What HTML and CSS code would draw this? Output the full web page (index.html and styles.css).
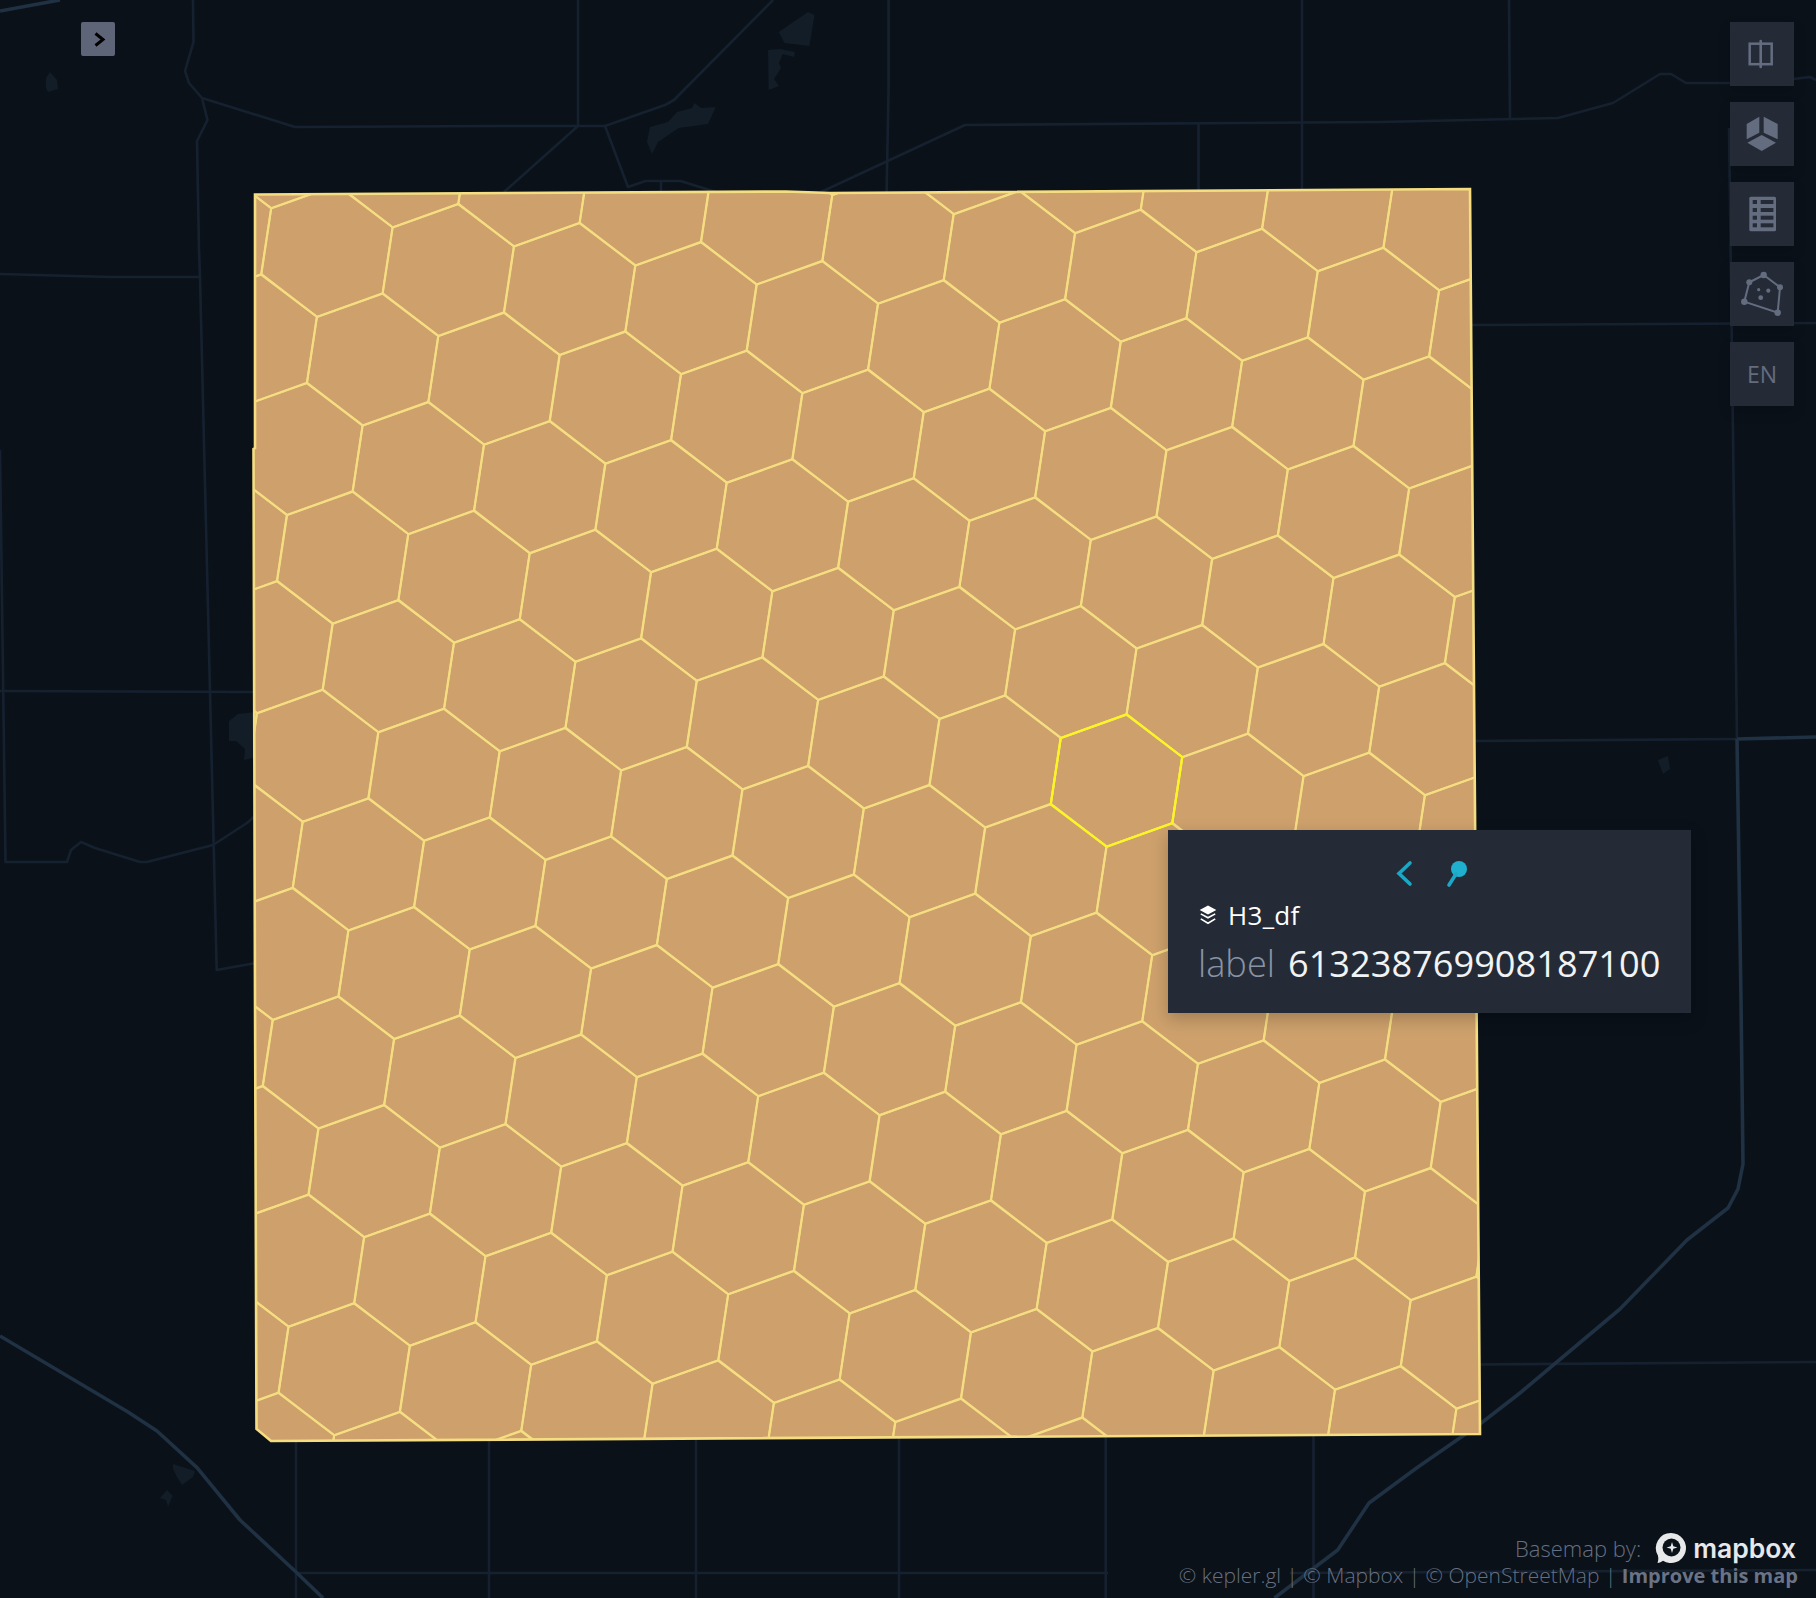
FILE: index.html
```html
<!DOCTYPE html>
<html lang="en">
<head>
<meta charset="utf-8">
<title>kepler.gl</title>
<link rel="stylesheet" href="styles.css">
</head>
<body>
<main class="map">
  <svg class="basemap" viewBox="0 0 1816 1598" width="1816" height="1598" aria-hidden="true">
    <g class="water">
      <polygon points="50,72 57,80 58,89 48,92 46,88 46,78"/>
      <polygon points="808,12 814.5,15 809.4,46 784.6,43 778.8,32"/>
      <polygon points="768,50 779.5,49 795,52 794,57 782.6,54 779,63 781,68 774,79 779,86 768.6,90"/>
      <polygon points="694.6,103 701,108 715.7,107 708,124 678.7,128 658,142 652,154 647,142 650,127 668,122 677,112 692,108"/>
      <polygon points="229,721 238,714 256,712 256,757 244,760 245,749 236,741 229,741"/>
      <polygon points="173,1464 195,1471 193,1477 182,1485 177,1477 173,1469"/>
      <polygon points="160,1498 167,1490 172.6,1496 168,1507 166,1500"/>
      <polygon points="1658,760 1668,756 1670,769 1663,774"/>
    </g>
    <g class="road-faint">
      <polyline points="193,0 193.5,42 185,71 189,83 202,98 207.5,120 197,141 199,250 200,277 216.7,970 256,963"/>
      <polyline points="202,98 295,127 500,126 605,126"/>
      <polyline points="0,274 110,277 200,277"/>
      <polyline points="0,450 5.5,862 67,862 71,850 81,842 95,848 140,862 147,862 213,845 247,823 256,815"/>
      <polyline points="0,691 256,692"/>
      <polyline points="578,0 578,126 504,192"/>
      <polyline points="773,0 674,100 665,105 605,126 628,187 645.5,181 680.6,181 715.7,192"/>
      <polyline points="661,182 661,192"/>
      <polyline points="821,192 965,125 1380,122 1558,118 1613,103 1660,74 1671,74 1686,83 1760,83 1810,77 1816,80"/>
      <polyline points="888.5,0 888.5,93 886.6,192"/>
      <polyline points="1198.5,123 1198.5,192"/>
      <polyline points="1302,0 1302,192"/>
      <polyline points="1509,0 1510,120"/>
      <polyline points="1729,128 1737,739"/>
      <polyline points="1472,325 1816,323"/>
      <polyline points="1476,741 1737,739"/>
      <polyline points="1480,1364.5 1816,1362"/>
      <polyline points="296,1440 296,1598"/>
      <polyline points="489,1440 489,1598"/>
      <polyline points="696,1438 696,1598"/>
      <polyline points="899,1437 899,1598"/>
      <polyline points="1105.7,1436 1105.7,1598"/>
      <polyline points="1313.5,1435 1313.5,1598"/>
      <polyline points="296,1573 1108,1573"/>
      <polyline points="1290,1573 1816,1570"/>
    </g>
    <g class="road-main">
      <polyline points="0,11 60,0"/>
      <polyline points="0,1336 128,1412 157,1431 197,1467.6 240,1520 296,1572 323,1598"/>
      <polyline points="1737,739 1816,737"/>
      <polyline points="1737,739 1741,1000 1743,1164 1738,1189 1728,1208 1687,1240 1620,1309 1520,1393 1480,1424 1418,1467 1369,1503 1337.7,1550 1274.5,1598"/>
    </g>
    <defs>
      <clipPath id="field-clip">
        <polygon points="255,194.5 786,191.5 830,193 1470,189 1480,1434 271,1441 256.5,1429 255,1000 253.5,449 255,448"/>
      </clipPath>
    </defs>
    <polygon class="field" points="255,194.5 786,191.5 830,193 1470,189 1480,1434 271,1441 256.5,1429 255,1000 253.5,449 255,448"/>
    <g id="cells" class="cells" clip-path="url(#field-clip)"></g>
    <polygon class="field-edge" points="255,194.5 786,191.5 830,193 1470,189 1480,1434 271,1441 256.5,1429 255,1000 253.5,449 255,448"/>
    <polygon class="cell-active" points="1126.7,714.3 1182.3,757 1172.3,823.3 1106.7,846.7 1050.7,804.3 1060.7,738"/>
  </svg>

  <button class="side-toggle" type="button" aria-label="Show sidebar">
    <svg viewBox="0 0 34 34" width="34" height="34"><polyline class="chevron-dark" points="14.500,11.500 22,17.500 14.500,23.500"/></svg>
  </button>

  <nav class="toolbar">
    <button class="tool" type="button" aria-label="Split map">
      <svg viewBox="0 0 64 64" width="64" height="64">
        <rect class="tool-line" x="19.7" y="21.7" width="22" height="20.5"/>
        <line class="tool-line heavy" x1="30.7" y1="19" x2="30.7" y2="45"/>
      </svg>
    </button>
    <button class="tool" type="button" aria-label="3D view">
      <svg viewBox="0 0 64 64" width="64" height="64">
        <polygon class="tool-fill" points="16.7,22 29.3,14.7 29.3,30.7 16.7,37.3"/>
        <polygon class="tool-fill" points="33.7,14.7 47.7,22 47.7,37.3 33.7,30.7"/>
        <polygon class="tool-fill" points="31.7,33 46,40.7 31.7,49 17.3,40.7"/>
      </svg>
    </button>
    <button class="tool" type="button" aria-label="Data table">
      <svg viewBox="0 0 64 64" width="64" height="64">
        <rect class="tool-fill" x="19.3" y="14.7" width="26.7" height="34.6" rx="1.5"/>
        <g class="tool-cut">
          <rect x="22.7" y="18" width="4.3" height="4"/><rect x="30.7" y="18" width="12.7" height="4"/>
          <rect x="22.7" y="26" width="4.3" height="4"/><rect x="30.7" y="26" width="12.7" height="4"/>
          <rect x="22.7" y="33.7" width="4.3" height="4"/><rect x="30.7" y="33.7" width="12.7" height="4"/>
          <rect x="22.7" y="41.3" width="4.3" height="4"/><rect x="30.7" y="41.3" width="12.7" height="4"/>
        </g>
      </svg>
    </button>
    <button class="tool" type="button" aria-label="Draw on map">
      <svg viewBox="0 0 64 64" width="64" height="64">
        <polygon class="tool-line thin" points="33.7,13 50,25.3 47.7,50.7 14.3,39.7 19.3,20.3"/>
        <g class="tool-fill">
          <circle cx="33.7" cy="13" r="3.2"/><circle cx="50" cy="25.3" r="3"/><circle cx="47.7" cy="50.7" r="3.2"/>
          <circle cx="14.3" cy="39.7" r="3.2"/><circle cx="19.3" cy="20.3" r="3"/>
          <circle cx="28.7" cy="27.7" r="1.6"/><circle cx="38.3" cy="28.7" r="2.1"/><circle cx="30.7" cy="35.7" r="2.4"/>
        </g>
      </svg>
    </button>
    <button class="tool tool-text" type="button">EN</button>
  </nav>

  <section class="tooltip">
    <div class="tooltip-actions">
      <svg viewBox="0 0 18 28" width="18" height="28"><polyline class="accent-line" points="14,3 3,13.5 14,24"/></svg>
      <svg viewBox="0 0 24 28" width="24" height="28">
        <circle class="accent-fill" cx="14" cy="9" r="8"/>
        <line class="accent-line" x1="11" y1="14" x2="4" y2="25"/>
      </svg>
    </div>
    <div class="tooltip-layer">
      <svg viewBox="0 0 16 18" width="18" height="20">
        <polygon class="layer-top" points="8,0.5 15.5,4.5 8,8.5 0.5,4.5"/>
        <polyline class="layer-line" points="1.5,8 8,11.5 14.500,8"/>
        <polyline class="layer-line" points="1.5,12.5 8,16.5 14.500,12.5"/>
      </svg>
      <span>H3_df</span>
    </div>
    <div class="tooltip-row">
      <span class="tooltip-key">label</span>
      <span class="tooltip-value">613238769908187100</span>
    </div>
  </section>

  <footer class="attribution">
    <div class="basemap-by">
      <span>Basemap by:</span>
      <svg viewBox="0 0 32 32" width="32" height="32">
        <path class="logo-mark" d="M16 1a15 15 0 1 1-8 27.7C6.500 29.800 4.500 31 2.500 31 3.500 28.500 3.500 26 2.900 23.500A15 15 0 0 1 16 1Z"/>
        <circle class="logo-hole" cx="16.500" cy="15.500" r="9"/>
        <path class="logo-star" d="M17 10l1.300 4.200 4.200 1.300-4.200 1.300L17 21l-1.300-4.200-4.200-1.300 4.200-1.300Z"/>
      </svg>
      <span class="mapbox-word">mapbox</span>
    </div>
    <div class="credits">© kepler.gl | © Mapbox | © OpenStreetMap | <strong>Improve this map</strong></div>
  </footer>
</main>
<script src="app.js"></script>
</body>
</html>
```

FILE: styles.css
```css
* { box-sizing: border-box; }
html, body { margin: 0; padding: 0; }
body { background: #0a1119; font-family: "Open Sans", "Liberation Sans", sans-serif; }

.map { position: relative; width: 1816px; height: 1598px; overflow: hidden; background: #0a1119; }
.basemap { position: absolute; inset: 0; display: block; }

.water polygon { fill: #121d27; }
.road-faint polyline { fill: none; stroke: #162130; stroke-width: 2.6; stroke-linejoin: round; }
.road-main polyline { fill: none; stroke: #1f3142; stroke-width: 3.6; stroke-linejoin: round; }

.field { fill: #cea16c; }
.cells polygon { fill: none; stroke: #f5de82; stroke-width: 2; stroke-linejoin: round; }
.field-edge { fill: none; stroke: #f5de82; stroke-width: 2.6; stroke-linejoin: miter; }
.cell-active { fill: none; stroke: #fbf71c; stroke-width: 2.2; stroke-linejoin: round; }

.side-toggle {
  position: absolute; left: 81px; top: 22px;
  width: 34px; height: 34px; padding: 0; border: 0; border-radius: 2px;
  background: #5f6579; display: block;
}
.side-toggle svg { display: block; }
.chevron-dark { fill: none; stroke: #000; stroke-width: 3; stroke-linecap: butt; stroke-linejoin: miter; }

.toolbar { position: absolute; top: 22px; right: 22px; display: flex; flex-direction: column; gap: 16px; }
.tool {
  width: 64px; height: 64px; padding: 0; border: 0; display: block;
  background: #242b36; box-shadow: 0 6px 12px rgba(0, 0, 0, 0.16);
}
.tool svg { display: block; }
.tool-fill { fill: #646c80; }
.tool-cut rect { fill: #242b36; }
.tool-line { fill: none; stroke: #646c80; stroke-width: 2.5; }
.tool-line.heavy { stroke-width: 2.6; stroke-linecap: round; }
.tool-line.thin { stroke-width: 2; }
.tool-text { color: #646c80; font-family: "Open Sans", sans-serif; font-size: 23px; font-weight: 500; line-height: 62px; text-align: center; }

.tooltip {
  position: absolute; left: 1168px; top: 830px; width: 523px; height: 183px;
  padding: 30px 30px 0 30px; background: #242b36; color: #fff;
  box-shadow: 0 6px 16px rgba(0, 0, 0, 0.22);
}
.tooltip-actions { display: flex; justify-content: center; gap: 31px; height: 32px; margin-left: 5px; }
.tooltip-actions svg { display: block; }
.accent-line { fill: none; stroke: #1ca7c6; stroke-width: 3.6; stroke-linecap: round; }
.accent-fill { fill: #1fb0d0; }

.tooltip-layer { display: flex; align-items: center; gap: 11px; height: 36px; margin-top: 5px; padding-left: 1px; font-size: 26px; letter-spacing: 0.3px; line-height: 36px; }
.tooltip-layer svg { display: block; }
.layer-top { fill: #fff; }
.layer-line { fill: none; stroke: #fff; stroke-width: 1.5; }

.tooltip-row { display: flex; align-items: baseline; gap: 13px; font-size: 36.2px; line-height: 50px; margin-top: 5px; }
.tooltip-key { color: #8a93a3; font-weight: 300; }
.tooltip-value { color: #f1f3f5; }

.attribution {
  position: absolute; right: 18px; bottom: 8px;
  display: flex; flex-direction: column; align-items: flex-end;
  color: #666f81; font-weight: 300; font-size: 21px; line-height: 28px;
}
.basemap-by { display: flex; align-items: center; gap: 12px; height: 36px; margin-right: 2px; margin-bottom: -5px; font-size: 22px; }
.basemap-by svg { display: block; margin-left: 2px; }
.logo-mark { fill: #e6e8ea; }
.logo-hole { fill: #0a1119; }
.logo-star { fill: #e6e8ea; }
.mapbox-word { color: #e6e8ea; font-family: "Inter", sans-serif; font-weight: 600; font-size: 26.500px; margin-left: -6px; }
.credits { white-space: nowrap; }
.credits strong { font-weight: 700; font-size: 20px; color: #6a7385; }
```

FILE: app.js
```js
(function () {
  var SVG = "http://www.w3.org/2000/svg";
  var centre = [1116.5, 780.5];
  var rowStep = [121.36, 19.06];
  var colStep = [45.7, 108.6];
  var corners = [[10.2, -66.2], [65.8, -23.5], [55.8, 42.8], [-9.8, 66.2], [-65.8, 23.8], [-55.8, -42.5]];
  var host = document.getElementById("cells");
  for (var n = -16; n <= 16; n++) {
    for (var m = -16; m <= 16; m++) {
      var x = centre[0] + n * rowStep[0] + m * colStep[0];
      var y = centre[1] + n * rowStep[1] + m * colStep[1];
      if (x < 160 || x > 1580 || y < 100 || y > 1540) continue;
      var cell = document.createElementNS(SVG, "polygon");
      cell.setAttribute("points", corners.map(function (c) {
        return (x + c[0]).toFixed(1) + "," + (y + c[1]).toFixed(1);
      }).join(" "));
      host.appendChild(cell);
    }
  }
})();
```
